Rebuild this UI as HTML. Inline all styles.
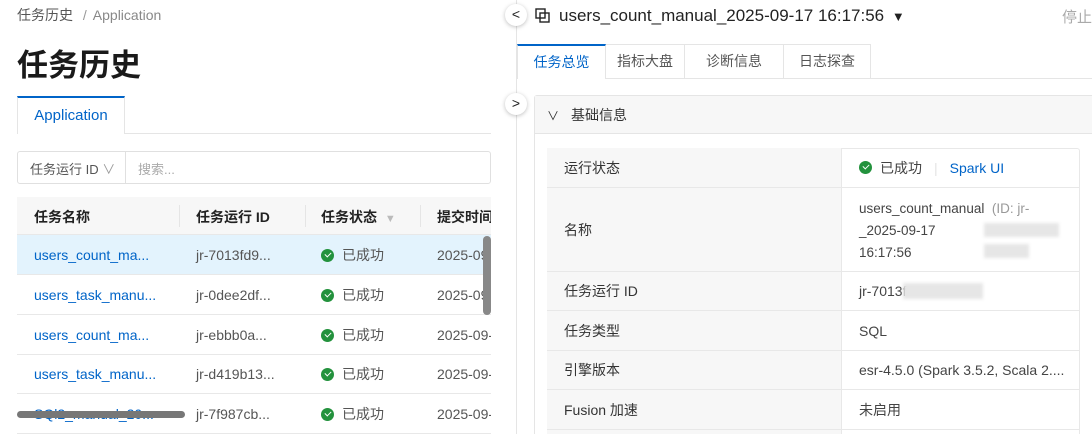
<!DOCTYPE html>
<html style="width:1092px;height:434px;overflow:hidden"><head><meta charset="utf-8"><style>
*{box-sizing:border-box;margin:0;padding:0}
body{width:1092px;height:434px;overflow:hidden;background:#fff;font-family:"Liberation Sans","Noto Sans CJK SC",sans-serif;color:#333;font-size:14px;position:relative}
.a{position:absolute;white-space:nowrap}
.link{color:#0064c8}
.ok{display:inline-block;width:13px;height:13px;border-radius:50%;background:#23923d;vertical-align:-2px;margin-right:8px;position:relative}
.ok:after{content:"";position:absolute;left:3.5px;top:3px;width:5px;height:3px;border-left:1.6px solid #fff;border-bottom:1.6px solid #fff;transform:rotate(-45deg)}
.row{position:absolute;left:17px;width:474px;height:40px;border-bottom:1px solid #e8e8e8;overflow:hidden}
.row span{position:absolute;top:0;line-height:40px;font-size:14px;white-space:nowrap}
.circ{position:absolute;width:22px;height:22px;border-radius:50%;background:#fff;box-shadow:0 1px 4px rgba(0,0,0,.25);font-size:14px;text-align:center;line-height:21px;color:#222}
.tab{position:absolute;top:44px;height:35px;border:1px solid #e5e5e5;border-left:none;background:#fff;font-size:14px;color:#555;text-align:center;line-height:33px}
.dr{position:absolute;left:547px;width:533px;border-bottom:1px solid #e8e8e8}
.dr .l{position:absolute;left:0;top:0;bottom:0;width:295px;background:#f7f7f7;border-right:1px solid #e8e8e8;padding-left:17px;display:flex;align-items:center}
.dr .v{position:absolute;left:312px;display:flex;align-items:center;top:0;bottom:0;color:#444;white-space:nowrap}
.blur{position:absolute;background:#e6e6e6;filter:blur(1.5px)}
</style></head><body>
<div class="a" style="left:17px;top:5px;color:#555">任务历史 <span style="color:#999;margin:0 6px">/</span><span style="color:#888">Application</span></div>
<div class="a" style="left:17px;top:40px;font-size:31px;font-weight:bold;color:#1a1a1a">任务历史</div>
<div class="a" style="left:17px;top:96px;width:108px;height:38px;border:1px solid #e5e5e5;border-top:2px solid #0064c8;border-bottom:none;background:#fff;color:#0064c8;font-size:15px;text-align:center;line-height:36px">Application</div>
<div class="a" style="left:125px;top:133px;width:366px;height:1px;background:#e5e5e5"></div>
<div class="a" style="left:17px;top:151px;width:474px;height:33px;border:1px solid #e0e0e0;border-radius:3px"></div>
<div class="a" style="left:125px;top:151px;width:1px;height:33px;background:#e0e0e0"></div>
<div class="a" style="left:30px;top:159px;font-size:13px;color:#555">任务运行 ID <span style="color:#999">∨</span></div>
<div class="a" style="left:138px;top:159px;font-size:13px;color:#aaa">搜索...</div>
<div class="a" style="left:17px;top:197px;width:474px;height:38px;background:#f7f7f7;border-bottom:1px solid #e8e8e8;overflow:hidden">
<div class="a" style="left:17px;top:10px;font-weight:bold;color:#222">任务名称</div>
<div class="a" style="left:162px;top:8px;width:1px;height:22px;background:#e5e5e5"></div>
<div class="a" style="left:179px;top:10px;font-weight:bold;color:#222">任务运行 ID</div>
<div class="a" style="left:288px;top:8px;width:1px;height:22px;background:#e5e5e5"></div>
<div class="a" style="left:304px;top:10px;font-weight:bold;color:#222">任务状态 <span style="color:#bbb;font-size:11px;margin-left:4px">▼</span></div>
<div class="a" style="left:403px;top:8px;width:1px;height:22px;background:#e5e5e5"></div>
<div class="a" style="left:420px;top:10px;font-weight:bold;color:#222">提交时间</div>
</div>
<div class="row" style="top:235px;background:#e3f3fd"><span class="link" style="left:17px">users_count_ma...</span><span style="left:179px;color:#555">jr-7013fd9...</span><span style="left:304px;color:#555"><i class="ok"></i>已成功</span><span style="left:420px;color:#555">2025-09-</span></div>
<div class="row" style="top:275px"><span class="link" style="left:17px">users_task_manu...</span><span style="left:179px;color:#555">jr-0dee2df...</span><span style="left:304px;color:#555"><i class="ok"></i>已成功</span><span style="left:420px;color:#555">2025-09-</span></div>
<div class="row" style="top:315px"><span class="link" style="left:17px">users_count_ma...</span><span style="left:179px;color:#555">jr-ebbb0a...</span><span style="left:304px;color:#555"><i class="ok"></i>已成功</span><span style="left:420px;color:#555">2025-09-</span></div>
<div class="row" style="top:354px"><span class="link" style="left:17px">users_task_manu...</span><span style="left:179px;color:#555">jr-d419b13...</span><span style="left:304px;color:#555"><i class="ok"></i>已成功</span><span style="left:420px;color:#555">2025-09-</span></div>
<div class="row" style="top:394px"><span class="link" style="left:17px">SQl2_manual_20...</span><span style="left:179px;color:#555">jr-7f987cb...</span><span style="left:304px;color:#555"><i class="ok"></i>已成功</span><span style="left:420px;color:#555">2025-09-</span></div>
<div class="a" style="left:483px;top:236px;width:8px;height:79px;border-radius:4px;background:#888"></div>
<div class="a" style="left:17px;top:411px;width:168px;height:7px;border-radius:4px;background:#777"></div>
<div class="a" style="left:516px;top:0;width:1px;height:434px;background:#e5e5e5"></div>
<svg class="a" style="left:535px;top:8px" width="15" height="15" viewBox="0 0 15 15" fill="none" stroke="#222" stroke-width="1.4"><rect x="1" y="1" width="9" height="9"/><rect x="5" y="5" width="9" height="9"/></svg>
<div class="a" style="left:559px;top:6px;font-size:17px;color:#222">users_count_manual_2025-09-17 16:17:56 <span style="font-size:13px;margin-left:3px">▼</span></div>
<div class="a" style="left:1062px;top:6px;font-size:15px;color:#aaa">停止</div>
<div class="tab" style="left:517px;width:89px;border-top:2px solid #0064c8;border-left:1px solid #e5e5e5;border-bottom:none;color:#0064c8">任务总览</div>
<div class="tab" style="left:606px;width:79px">指标大盘</div>
<div class="tab" style="left:685px;width:99px">诊断信息</div>
<div class="tab" style="left:784px;width:87px">日志探查</div>
<div class="a" style="left:871px;top:78px;width:221px;height:1px;background:#e5e5e5"></div>
<div class="a" style="left:534px;top:95px;width:570px;height:339px;border:1px solid #e5e5e5;border-bottom:none;border-radius:3px 3px 0 0"></div>
<div class="a" style="left:535px;top:96px;width:557px;height:38px;background:#f7f7f7;border-bottom:1px solid #e5e5e5"></div>
<div class="a" style="left:547px;top:105px;font-size:14px;color:#333"><span style="font-size:12px;margin-right:12px">∨</span>基础信息</div>
<div class="a" style="left:547px;top:148px;width:533px;height:286px;border:1px solid #e8e8e8;border-bottom:none;border-radius:3px 3px 0 0"></div>
<div class="dr" style="top:148px;height:40px"><div class="l">运行状态</div><div class="v"><i class="ok"></i>已成功<span style="color:#e5e5e5;margin:0 12px">|</span><span class="link">Spark UI</span></div></div>
<div class="dr" style="top:188px;height:84px"><div class="l">名称</div><div class="v" style="display:block;top:10px;line-height:22px;font-size:13.5px">users_count_manual <span style="color:#999">&nbsp;(ID: jr-</span><br>_2025-09-17<br>16:17:56</div></div>
<div class="blur" style="left:984px;top:223px;width:75px;height:14px"></div>
<div class="blur" style="left:984px;top:244px;width:45px;height:14px"></div>
<div class="dr" style="top:272px;height:39px"><div class="l">任务运行 ID</div><div class="v">jr-7013f</div></div>
<div class="blur" style="left:903px;top:283px;width:80px;height:16px"></div>
<div class="dr" style="top:311px;height:40px"><div class="l">任务类型</div><div class="v">SQL</div></div>
<div class="dr" style="top:351px;height:39px"><div class="l">引擎版本</div><div class="v">esr-4.5.0 (Spark 3.5.2, Scala 2....</div></div>
<div class="dr" style="top:390px;height:40px"><div class="l">Fusion 加速</div><div class="v">未启用</div></div>
<div class="dr" style="top:430px;height:4px;border:none"><div class="l"></div></div>
<div class="circ" style="left:505px;top:4px">&lt;</div>
<div class="circ" style="left:505px;top:93px">&gt;</div>
</body></html>
